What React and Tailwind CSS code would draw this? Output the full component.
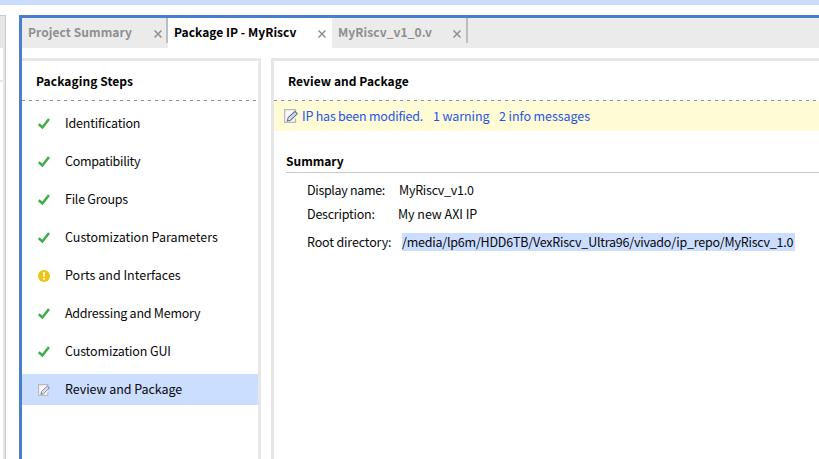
const steps = [
  ["Identification", "check", "tracking-[-0.2px]"],
  ["Compatibility", "check", "tracking-[-0.3px]"],
  ["File Groups", "check", "tracking-[-0.25px]"],
  ["Customization Parameters", "check", "tracking-[-0.01px]"],
  ["Ports and Interfaces", "warn", "tracking-normal"],
  ["Addressing and Memory", "check", "tracking-[-0.25px]"],
  ["Customization GUI", "check", "tracking-[-0.13px]"],
  ["Review and Package", "edit", "tracking-[-0.05px]"],
];

function EditIcon({ size }) {
  return (
    <svg className="shrink-0" width={size} height={size} viewBox="0 0 14 14" fill="none">
      <path d="M11.5 4V.7H.7v12.6h10.8V9.5" fill="#f9f9f9" stroke="#b9b9b9" strokeWidth="1.3" />
      <path d="M3.4 12l.8-3.4L10.9 2.6l2.4 2-6.8 6.6z" fill="#fff" stroke="#5b7199" strokeWidth="1.1" />
      <path d="M5.4 9.9L11.7 4" stroke="#5b7199" strokeWidth=".5" />
    </svg>
  );
}

function StepIcon({ kind }) {
  if (kind === "edit") return <EditIcon size={12} />;
  if (kind === "warn")
    return (
      <svg width="12" height="12" viewBox="0 0 12 12">
        <circle cx="6" cy="6" r="6" fill="#ebc414" />
        <path d="M6 2v4.8M6 8v1.8" stroke="#fff" strokeWidth="1.6" />
      </svg>
    );
  return (
    <svg width="12" height="12" viewBox="0 0 12 12" fill="none">
      <path d="M.8 6.2L4.4 9.4L11 1" stroke="#3fae49" strokeWidth="2.5" />
    </svg>
  );
}

function Close() {
  return (
    <svg className="mt-3 shrink-0" width="8" height="8" viewBox="0 0 8 8">
      <path d="M.5.5l7 7M7.5.5l-7 7" stroke="#8f8f8f" strokeWidth="1.5" />
    </svg>
  );
}

function Dashes() {
  return (
    <div className="h-px shrink-0 bg-[repeating-linear-gradient(90deg,#8c8c8c_0_3px,transparent_3px_7px)]" />
  );
}

export default function App() {
  return (
    <div className="flex h-[459px] w-[819px] flex-col overflow-hidden bg-white font-['Noto_Sans_CJK_JP','Noto_Sans',sans-serif] text-[12.5px] whitespace-nowrap text-[#080808]">
      <div className="mb-[10px] h-[5px] shrink-0 bg-[#ccdeff]" />
      <div className="flex min-h-0 flex-1">
        <div className="mr-[13px] flex w-[6px] shrink-0 flex-col border-t border-r border-[#cacaca] bg-[#e6e6e6]">
          <div className="mt-8 mr-[2px] h-8 bg-white" />
          <div className="mt-[2px] mr-[2px] flex-1 bg-white" />
        </div>
        <div className="flex min-w-0 flex-1 flex-col border-t-[3px] border-l-[3px] border-[#497dcd]">
          <div className="flex h-[30px] shrink-0 bg-[#ebebeb] text-[12px] leading-[28px] font-bold tracking-[0.07px] text-[#8f8f8f]">
            <div className="flex w-[144px] pl-[6px]">
              <span className="w-[126px]">Project Summary</span>
              <Close />
            </div>
            <div className="h-[25px] w-[2px] bg-[#bdbdbd]" />
            <div className="flex w-[164px] bg-white pl-[6px] tracking-[0.03px] text-black">
              <span className="w-[144px]">Package IP - MyRiscv</span>
              <Close />
            </div>
            <div className="flex w-[134px] pl-[6px]">
              <span className="w-[115px]">MyRiscv_v1_0.v</span>
              <Close />
            </div>
            <div className="h-[25px] w-[2px] bg-[#bdbdbd]" />
          </div>
          <div className="mt-[10px] flex min-h-0 flex-1 gap-[10px]">
            <div className="flex w-[239px] shrink-0 flex-col border-t-[3px] border-r-[3px] border-[#e6e6e6]">
              <h2 className="h-[39px] pl-[14px] text-[12px] leading-[40px] font-bold tracking-[0.07px] text-black">Packaging Steps</h2>
              <Dashes />
              <ul className="pt-[7px]">
                {steps.map(([label, kind, tracking]) => (
                  <li
                    key={label}
                    className={
                      kind === "edit"
                        ? "mb-[7px] flex h-[31px] items-center gap-[15px] bg-[#ccdeff] pl-4"
                        : "mb-[7px] flex h-[31px] items-center gap-[15px] pl-4"
                    }
                  >
                    <StepIcon kind={kind} />
                    <span className={"leading-[19px] pb-[2px] " + tracking}>{label}</span>
                  </li>
                ))}
              </ul>
            </div>
            <div className="flex min-w-0 flex-1 flex-col border-t-[3px] border-l-[3px] border-[#e6e6e6]">
              <h2 className="h-[39px] shrink-0 pl-[14px] text-[12px] leading-[40px] font-bold tracking-[0.05px] text-black">Review and Package</h2>
              <Dashes />
              <div className="flex h-[30px] shrink-0 items-center bg-[#fffcd5] pl-[10px] text-[#1f55ea]">
                <EditIcon size={14} />
                <span className="ml-1 w-[131px] tracking-[-0.22px]">IP has been modified.</span>
                <span className="w-[66px] tracking-[-0.1px]">1 warning</span>
                <span className="tracking-[-0.07px]">2 info messages</span>
              </div>
              <div className="ml-3 h-[42px] shrink-0 border-b border-[#cacaca] pt-5 text-[12px] leading-[20px] font-bold text-black">
                Summary
              </div>
              <div className="mt-[5px] flex h-[24px] items-center pl-[33px]">
                <span className="w-[92px] tracking-[-0.33px]">Display name:</span>
                <span className="tracking-[-0.25px]">MyRiscv_v1.0</span>
              </div>
              <div className="flex h-[24px] items-center pl-[33px]">
                <span className="w-[91px] tracking-[-0.22px]">Description:</span>
                <span className="tracking-[-0.05px]">My new AXI IP</span>
              </div>
              <div className="mt-[7px] flex h-[18px] items-center pl-[33px] leading-[18px]">
                <span className="w-[95px] tracking-[-0.15px]">Root directory:</span>
                <span className="h-[18px] w-[393px] bg-[#ccdeff] tracking-[-0.22px]">/media/lp6m/HDD6TB/VexRiscv_Ultra96/vivado/ip_repo/MyRiscv_1.0</span>
              </div>
            </div>
          </div>
        </div>
      </div>
    </div>
  );
}
